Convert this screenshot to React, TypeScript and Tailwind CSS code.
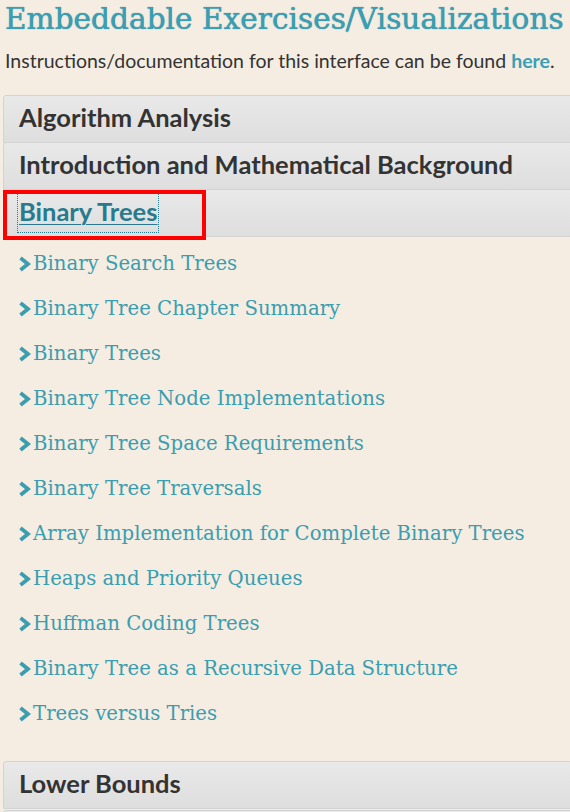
import React from "react";

const items = [
  "Binary Search Trees",
  "Binary Tree Chapter Summary",
  "Binary Trees",
  "Binary Tree Node Implementations",
  "Binary Tree Space Requirements",
  "Binary Tree Traversals",
  "Array Implementation for Complete Binary Trees",
  "Heaps and Priority Queues",
  "Huffman Coding Trees",
  "Binary Tree as a Recursive Data Structure",
  "Trees versus Tries",
];

function Chevron() {
  return (
    <svg width="13" height="16" viewBox="0 0 13 16" className="shrink-0">
      <path d="M2.5 2 L10 8 L2.5 14" fill="none" stroke="#3a9db0" strokeWidth="3.8" strokeLinejoin="miter" />
    </svg>
  );
}

function Header({ children }: { children: React.ReactNode }) {
  return (
    <div className="h-[48px] flex items-center pl-[15px] pb-[3px] border border-[#d3d3d3] rounded-t-[3px] bg-gradient-to-b from-[#e9e9e9] to-[#dedede] text-[25.5px] font-bold text-[#333] font-['Lato',sans-serif]">
      {children}
    </div>
  );
}

export default function App() {
  return (
    <div className="w-[570px] h-[812px] overflow-hidden bg-[#f5ede2]">
      <h1 className="pl-[5px] pt-[1px] text-[29.6px] leading-[36px] text-[#3a9fb4] font-['DejaVu_Serif',serif] whitespace-nowrap [text-shadow:0_0_1px_#2a7f92]">
        Embeddable Exercises/Visualizations
      </h1>
      <p className="pl-[5px] mt-[13px] text-[19.5px] leading-[22px] text-[#333] font-['Lato',sans-serif] whitespace-nowrap">
        Instructions/documentation for this interface can be found{" "}
        <a className="font-bold text-[#3a9fb4]">here</a>.
      </p>
      <div className="ml-[3px] mr-[-20px] mt-[23px]">
        <Header>Algorithm Analysis</Header>
        <div className="-mt-px">
          <Header>Introduction and Mathematical Background</Header>
        </div>
        <div className="-mt-px relative">
          <Header>
            <a className="text-[#287a8c] underline underline-offset-[3px] decoration-1 outline-1 outline-dotted outline-[#287a8c] outline-offset-[1px]">
              Binary Trees
            </a>
          </Header>
          <div className="absolute left-0 top-[1px] w-[203px] h-[50px] border-4 border-[#ff0000]" />
        </div>
        <ul className="pt-[4px] pb-[25px]">
          {items.map((t) => (
            <li key={t} className="h-[45px] flex items-center pl-[15px] gap-[2px]">
              <Chevron />
              <span className="text-[19.7px] text-[#3a9db0] font-['DejaVu_Serif',serif] whitespace-nowrap">{t}</span>
            </li>
          ))}
        </ul>
        <Header>Lower Bounds</Header>
        <div className="mt-[1px]">
          <Header> </Header>
        </div>
      </div>
    </div>
  );
}
